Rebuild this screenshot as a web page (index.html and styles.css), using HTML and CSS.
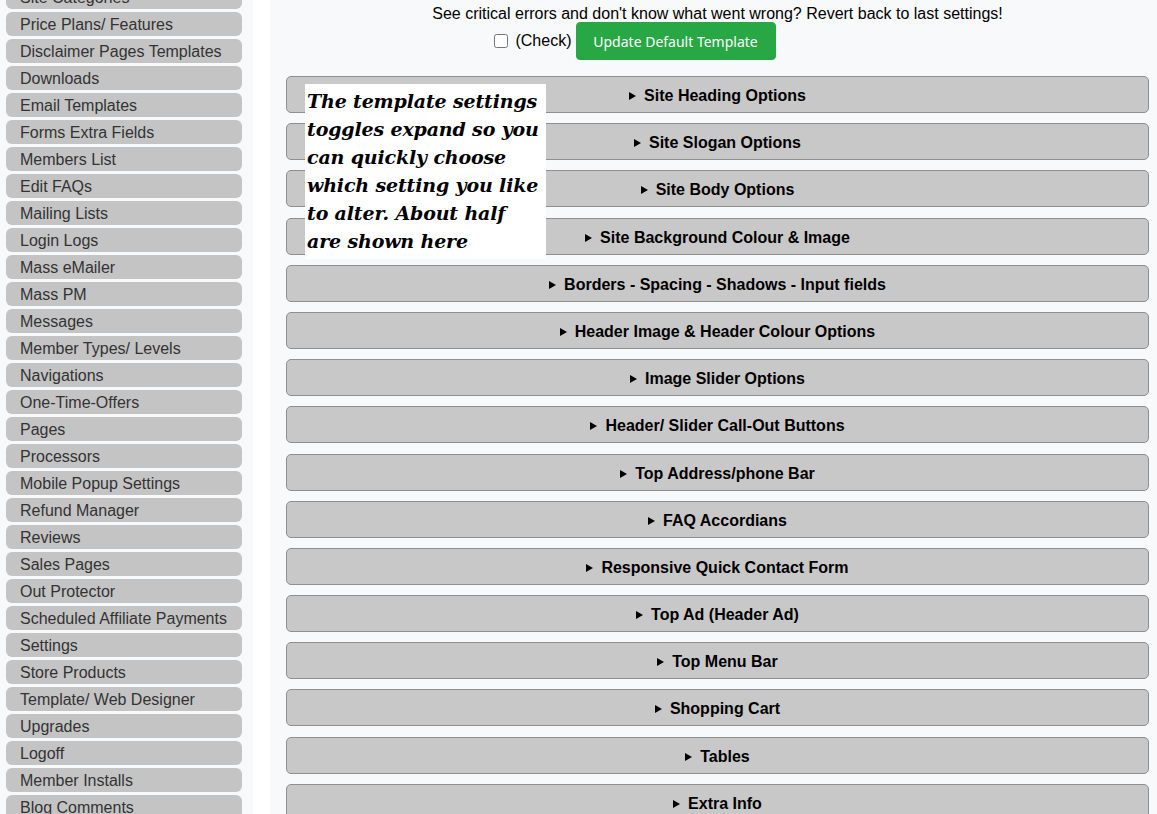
FILE: index.html
```html
<!DOCTYPE html>
<html lang="en">
<head>
<meta charset="utf-8">
<title>Template Web Designer</title>
<link rel="stylesheet" href="styles.css">
</head>
<body>
<div class="page">
  <aside class="sidebar">
    <nav class="menu">
      <a class="menu-item" href="#">Site Categories</a>
      <a class="menu-item" href="#">Price Plans/ Features</a>
      <a class="menu-item" href="#">Disclaimer Pages Templates</a>
      <a class="menu-item" href="#">Downloads</a>
      <a class="menu-item" href="#">Email Templates</a>
      <a class="menu-item" href="#">Forms Extra Fields</a>
      <a class="menu-item" href="#">Members List</a>
      <a class="menu-item" href="#">Edit FAQs</a>
      <a class="menu-item" href="#">Mailing Lists</a>
      <a class="menu-item" href="#">Login Logs</a>
      <a class="menu-item" href="#">Mass eMailer</a>
      <a class="menu-item" href="#">Mass PM</a>
      <a class="menu-item" href="#">Messages</a>
      <a class="menu-item" href="#">Member Types/ Levels</a>
      <a class="menu-item" href="#">Navigations</a>
      <a class="menu-item" href="#">One-Time-Offers</a>
      <a class="menu-item" href="#">Pages</a>
      <a class="menu-item" href="#">Processors</a>
      <a class="menu-item" href="#">Mobile Popup Settings</a>
      <a class="menu-item" href="#">Refund Manager</a>
      <a class="menu-item" href="#">Reviews</a>
      <a class="menu-item" href="#">Sales Pages</a>
      <a class="menu-item" href="#">Out Protector</a>
      <a class="menu-item" href="#">Scheduled Affiliate Payments</a>
      <a class="menu-item" href="#">Settings</a>
      <a class="menu-item" href="#">Store Products</a>
      <a class="menu-item" href="#">Template/ Web Designer</a>
      <a class="menu-item" href="#">Upgrades</a>
      <a class="menu-item" href="#">Logoff</a>
      <a class="menu-item" href="#">Member Installs</a>
      <a class="menu-item" href="#">Blog Comments</a>
    </nav>
  </aside>
  <div class="gutter"></div>
  <main class="main">
    <p class="notice">See critical errors and don't know what went wrong? Revert back to last settings!</p>
    <form class="revert-row">
      <label class="check-label"><input type="checkbox" class="check"> (Check)</label>
      <button type="button" class="btn-green">Update Default Template</button>
    </form>
    <div class="toggles">
      <details class="toggle"><summary>Site Heading Options</summary></details>
      <details class="toggle"><summary>Site Slogan Options</summary></details>
      <details class="toggle"><summary>Site Body Options</summary></details>
      <details class="toggle"><summary>Site Background Colour &amp; Image</summary></details>
      <details class="toggle"><summary>Borders - Spacing - Shadows - Input fields</summary></details>
      <details class="toggle"><summary>Header Image &amp; Header Colour Options</summary></details>
      <details class="toggle"><summary>Image Slider Options</summary></details>
      <details class="toggle"><summary>Header/ Slider Call-Out Buttons</summary></details>
      <details class="toggle"><summary>Top Address/phone Bar</summary></details>
      <details class="toggle"><summary>FAQ Accordians</summary></details>
      <details class="toggle"><summary>Responsive Quick Contact Form</summary></details>
      <details class="toggle"><summary>Top Ad (Header Ad)</summary></details>
      <details class="toggle"><summary>Top Menu Bar</summary></details>
      <details class="toggle"><summary>Shopping Cart</summary></details>
      <details class="toggle"><summary>Tables</summary></details>
      <details class="toggle"><summary>Extra Info</summary></details>
    </div>
    <div class="callout">The template settings toggles expand so you can quickly choose which setting you like to alter. About half are shown here</div>
  </main>
</div>
</body>
</html>
```

FILE: styles.css
```css
html, body {
  margin: 0;
  padding: 0;
  height: 100%;
  overflow: hidden;
  background: #ffffff;
}

.page {
  display: flex;
  height: 814px;
  font-family: "Liberation Sans", Arial, sans-serif;
  font-size: 16px;
}

.sidebar {
  width: 253px;
  flex: 0 0 253px;
  background: #f8f9fa;
  overflow: hidden;
}

.menu {
  display: flex;
  flex-direction: column;
  gap: 3px;
  margin-top: -15px;
  padding-left: 6px;
  width: 236px;
}

.menu-item {
  display: block;
  height: 24px;
  line-height: 26px;
  padding-left: 14px;
  background: #c4c4c4;
  border-radius: 6px;
  color: #333333;
  text-decoration: none;
  white-space: nowrap;
  overflow: hidden;
}

.gutter {
  flex: 0 0 17px;
  background: #ffffff;
}

.main {
  position: relative;
  flex: 1 1 auto;
  background: #f8f9fa;
  padding: 0 8px 0 16px;
  overflow: hidden;
}

.notice {
  margin: 0;
  padding-top: 5px;
  height: 17px;
  line-height: 18px;
  text-align: center;
  color: #000;
}

.revert-row {
  display: flex;
  align-items: center;
  justify-content: center;
  margin: 0;
  padding: 0 165px 0 0;
  height: 38px;
}

.check-label {
  display: flex;
  align-items: center;
  color: #000;
  margin-right: 4px;
}

.check {
  width: 14px;
  height: 14px;
  margin: 0 7px 0 0;
}

.btn-green {
  height: 38px;
  width: 200px;
  padding: 0;
  border: 1px solid #28a745;
  border-radius: 4px;
  background: #28a745;
  color: #ffffff;
  font-family: "Noto Sans", "Open Sans", sans-serif;
  font-size: 14px;
  cursor: pointer;
}

.toggles {
  margin-top: 16px;
  display: flex;
  flex-direction: column;
  gap: 10.2px;
}

.toggle {
  height: 37px;
  box-sizing: border-box;
  border: 1px solid #8f8f8f;
  border-radius: 5px;
  background: #c8c8c8;
}

.toggle summary {
  display: block;
  list-style: none;
  height: 35px;
  line-height: 37px;
  text-align: center;
  font-weight: bold;
  color: #000;
  cursor: pointer;
}

.toggle summary::-webkit-details-marker {
  display: none;
}

.toggle summary::before {
  content: "";
  display: inline-block;
  width: 0;
  height: 0;
  border-left: 7px solid #000;
  border-top: 4px solid transparent;
  border-bottom: 4px solid transparent;
  margin-right: 8px;
  vertical-align: 1px;
}

.callout {
  position: absolute;
  left: 35px;
  top: 84px;
  width: 233px;
  height: 172px;
  padding: 3px 6px 0 2px;
  background: #ffffff;
  font-family: "DejaVu Serif", "Liberation Serif", serif;
  font-weight: bold;
  font-style: italic;
  font-size: 19px;
  letter-spacing: -0.15px;
  line-height: 28px;
  color: #000;
}
```
